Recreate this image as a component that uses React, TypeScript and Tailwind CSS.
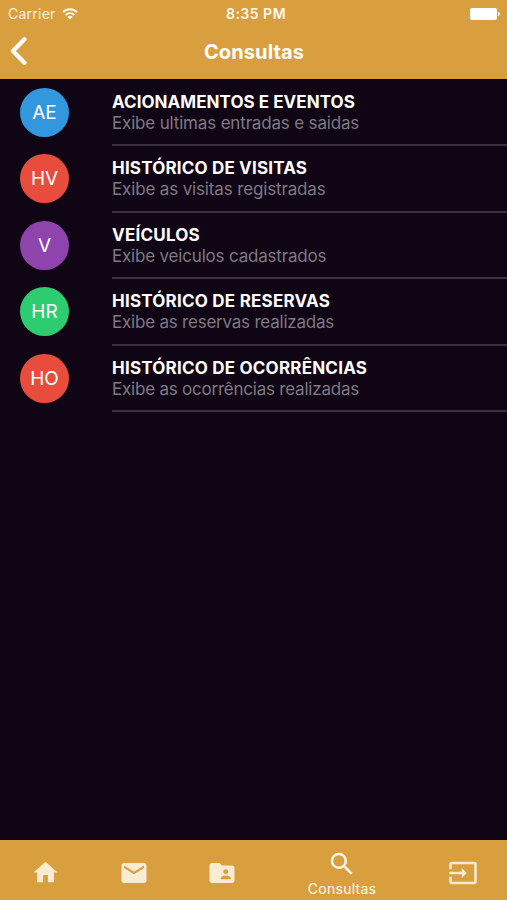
import React from "react";
import { MdHome, MdEmail, MdFolderShared, MdSearch, MdInput } from "react-icons/md";

const rows = [
  { initials: "AE", color: "bg-[#3297dc]", title: "ACIONAMENTOS E EVENTOS", titleSpacing: "tracking-[0.04px]", text: "Exibe ultimas entradas e saidas", textSpacing: "tracking-[-0.17px]" },
  { initials: "HV", color: "bg-[#e84c3d]", title: "HISTÓRICO DE VISITAS", titleSpacing: "tracking-[0.18px]", text: "Exibe as visitas registradas", textSpacing: "tracking-[-0.15px]" },
  { initials: "V", color: "bg-[#8f44ad]", title: "VEÍCULOS", titleSpacing: "tracking-[0.22px]", text: "Exibe veiculos cadastrados", textSpacing: "tracking-[-0.19px]" },
  { initials: "HR", color: "bg-[#2ecc71]", title: "HISTÓRICO DE RESERVAS", titleSpacing: "tracking-[0.22px]", text: "Exibe as reservas realizadas", textSpacing: "tracking-[-0.22px]" },
  { initials: "HO", color: "bg-[#e84c3d]", title: "HISTÓRICO DE OCORRÊNCIAS", titleSpacing: "tracking-[0.21px]", text: "Exibe as ocorrências realizadas", textSpacing: "tracking-[-0.22px]" },
];

function StatusBar() {
  return (
    <div className="grid h-[27px] grid-cols-3 items-center pr-[7px] pl-2 text-[14px] leading-none">
      <div className="flex items-center gap-[6px] text-[#fdf0d8]">
        <span className="tracking-[0.25px]">Carrier</span>
        <svg width="16" height="12" viewBox="0 0 16 12" fill="none" stroke="#fffaf0" strokeWidth="1.9">
          <path d="M1 4.1a10 10 0 0 1 14 0" />
          <path d="M3.6 7a6.2 6.2 0 0 1 8.8 0" />
          <path d="M8 11.6 5.4 9a3.7 3.7 0 0 1 5.2 0Z" fill="#fffaf0" stroke="none" />
        </svg>
      </div>
      <span className="pt-px pl-[4px] text-center font-semibold tracking-[0.5px] text-[#fff8ec]">8:35 PM</span>
      <div className="flex items-center justify-end">
        <span className="h-3 w-[27px] rounded-[2px] bg-white" />
        <span className="ml-px h-1 w-[2px] rounded-r-full bg-[#fff3da]" />
      </div>
    </div>
  );
}

export default function App() {
  return (
    <div className="flex h-[900px] w-[507px] flex-col overflow-hidden bg-[#0f0515] font-['Inter','Liberation_Sans',sans-serif]">
      <header className="h-[79px] shrink-0 bg-[#d99f3e] text-white">
        <StatusBar />
        <div className="grid h-[48px] grid-cols-[1fr_auto_1fr] items-center">
          <svg className="ml-[9px]" width="18" height="30" viewBox="0 0 18 30" fill="none" stroke="white" strokeWidth="4.3" strokeLinecap="round" strokeLinejoin="round">
            <path d="M15.5 3.2 4 15l11.5 11.8" />
          </svg>
          <h1 className="pt-[2px] pl-px text-[20px] leading-none font-bold tracking-[0.12px]">Consultas</h1>
        </div>
      </header>

      <main className="flex-1">
        {rows.map((row) => (
          <div key={row.title} className="flex h-[66.4px]">
            <div className="flex w-[112px] shrink-0 pt-[9px] pl-[20px]">
              <span className={`flex size-[49px] items-center justify-center rounded-full text-[19px] leading-none text-white ${row.color}`}>
                {row.initials}
              </span>
            </div>
            <div className="flex flex-1 translate-y-px flex-col border-b-2 border-[#3a313f] pt-[12px] whitespace-nowrap">
              <span className={`text-[17px] leading-[21px] font-bold text-white ${row.titleSpacing}`}>{row.title}</span>
              <span className={`text-[17px] leading-[21px] text-[#7f7982] ${row.textSpacing}`}>{row.text}</span>
            </div>
          </div>
        ))}
      </main>

      <nav className="flex h-[60px] shrink-0 bg-[#d99f3e] pt-[5px] text-[#faecd2]">
        <div className="flex w-[90px] items-center justify-center"><MdHome size={29} /></div>
        <div className="flex w-[87px] items-center justify-center"><MdEmail size={30} /></div>
        <div className="flex w-[90px] items-center justify-center"><MdFolderShared size={30} /></div>
        <div className="flex w-[150px] flex-col items-center pt-[4px] text-[#fffaf0]">
          <MdSearch size={30} />
          <span className="mt-px text-[14px] leading-[17px] tracking-[0.25px]">Consultas</span>
        </div>
        <div className="flex w-[90px] items-center justify-center pl-[2px]"><MdInput size={30} /></div>
      </nav>
    </div>
  );
}
